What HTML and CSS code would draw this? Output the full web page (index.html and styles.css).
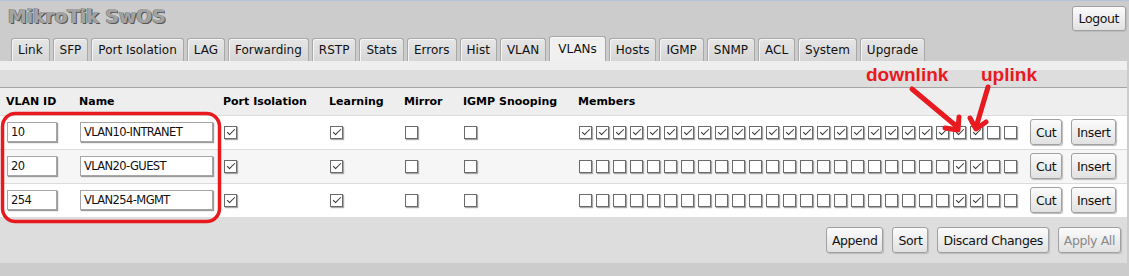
FILE: index.html
```html
<!DOCTYPE html>
<html>
<head>
<meta charset="utf-8">
<link rel="stylesheet" href="styles.css">
</head>
<body>
<div class="top">
  <div class="title">MikroTik SwOS</div>
  <button class="btn logout">Logout</button>
</div>
<div class="tabs">
  <span class="tab">Link</span><span class="tab">SFP</span><span class="tab">Port Isolation</span><span class="tab">LAG</span><span class="tab">Forwarding</span><span class="tab">RSTP</span><span class="tab">Stats</span><span class="tab">Errors</span><span class="tab">Hist</span><span class="tab">VLAN</span><span class="tab active">VLANs</span><span class="tab">Hosts</span><span class="tab">IGMP</span><span class="tab">SNMP</span><span class="tab">ACL</span><span class="tab">System</span><span class="tab">Upgrade</span>
</div>
<div class="panel">
  <div class="band"></div>
  <table class="grid">
    <colgroup>
      <col class="w1"><col class="w2"><col class="w3"><col class="w4"><col class="w5"><col class="w6"><col class="w7"><col class="w8"><col class="w9">
    </colgroup>
    <thead>
      <tr><th>VLAN ID</th><th>Name</th><th>Port Isolation</th><th>Learning</th><th>Mirror</th><th>IGMP Snooping</th><th>Members</th><th></th><th></th></tr>
    </thead>
    <tbody>
      <tr>
        <td><span class="inp id">10</span></td>
        <td><span class="inp name">VLAN10-INTRANET</span></td>
        <td><i class="cb on"></i></td>
        <td><i class="cb on"></i></td>
        <td><i class="cb"></i></td>
        <td><i class="cb"></i></td>
        <td><div class="members"><i class="cb on"></i><i class="cb on"></i><i class="cb on"></i><i class="cb on"></i><i class="cb on"></i><i class="cb on"></i><i class="cb on"></i><i class="cb on"></i><i class="cb on"></i><i class="cb on"></i><i class="cb on"></i><i class="cb on"></i><i class="cb on"></i><i class="cb on"></i><i class="cb on"></i><i class="cb on"></i><i class="cb on"></i><i class="cb on"></i><i class="cb on"></i><i class="cb on"></i><i class="cb on"></i><i class="cb on"></i><i class="cb on"></i><i class="cb on"></i><i class="cb"></i><i class="cb"></i></div></td>
        <td><button class="btn">Cut</button></td>
        <td><button class="btn">Insert</button></td>
      </tr>
      <tr class="alt">
        <td><span class="inp id">20</span></td>
        <td><span class="inp name">VLAN20-GUEST</span></td>
        <td><i class="cb on"></i></td>
        <td><i class="cb on"></i></td>
        <td><i class="cb"></i></td>
        <td><i class="cb"></i></td>
        <td><div class="members"><i class="cb"></i><i class="cb"></i><i class="cb"></i><i class="cb"></i><i class="cb"></i><i class="cb"></i><i class="cb"></i><i class="cb"></i><i class="cb"></i><i class="cb"></i><i class="cb"></i><i class="cb"></i><i class="cb"></i><i class="cb"></i><i class="cb"></i><i class="cb"></i><i class="cb"></i><i class="cb"></i><i class="cb"></i><i class="cb"></i><i class="cb"></i><i class="cb"></i><i class="cb on"></i><i class="cb on"></i><i class="cb"></i><i class="cb"></i></div></td>
        <td><button class="btn">Cut</button></td>
        <td><button class="btn">Insert</button></td>
      </tr>
      <tr>
        <td><span class="inp id">254</span></td>
        <td><span class="inp name">VLAN254-MGMT</span></td>
        <td><i class="cb on"></i></td>
        <td><i class="cb on"></i></td>
        <td><i class="cb"></i></td>
        <td><i class="cb"></i></td>
        <td><div class="members"><i class="cb"></i><i class="cb"></i><i class="cb"></i><i class="cb"></i><i class="cb"></i><i class="cb"></i><i class="cb"></i><i class="cb"></i><i class="cb"></i><i class="cb"></i><i class="cb"></i><i class="cb"></i><i class="cb"></i><i class="cb"></i><i class="cb"></i><i class="cb"></i><i class="cb"></i><i class="cb"></i><i class="cb"></i><i class="cb"></i><i class="cb"></i><i class="cb"></i><i class="cb on"></i><i class="cb on"></i><i class="cb"></i><i class="cb"></i></div></td>
        <td><button class="btn">Cut</button></td>
        <td><button class="btn">Insert</button></td>
      </tr>
    </tbody>
  </table>
  <div class="footer">
    <button class="btn">Append</button>
    <button class="btn">Sort</button>
    <button class="btn">Discard Changes</button>
    <button class="btn disabled">Apply All</button>
  </div>
</div>
<svg class="overlay" width="1129" height="276" viewBox="0 0 1129 276">
  <rect x="2.5" y="113.5" width="217" height="108" rx="13" ry="13" fill="none" stroke="#e8191f" stroke-width="3.5"/>
  <text x="866" y="81" class="anno">downlink</text>
  <text x="981" y="81" class="anno">uplink</text>
  <g stroke="#e8191f" stroke-width="5" fill="none" stroke-linecap="round" stroke-linejoin="round">
    <line x1="912" y1="89" x2="955" y2="125"/>
    <polyline points="945,128 958,130 959,117"/>
    <line x1="988" y1="87" x2="977" y2="124"/>
    <polyline points="970,118 976,129 986,122"/>
  </g>
</svg>
</body>
</html>
```
FILE: styles.css
```css
* { box-sizing: border-box; }
html, body { margin: 0; padding: 0; }
body {
  background: #cccccc;
  border-top: 1px solid #b4c4d6;
  font-family: "DejaVu Sans", Verdana, sans-serif;
  font-size: 12px;
  color: #000;
  width: 1129px;
  height: 276px;
  overflow: hidden;
  position: relative;
}
.top {
  display: flex;
  justify-content: space-between;
  align-items: flex-start;
  padding: 3px 3px 0 8px;
  height: 35px;
}
.title {
  font-family: "DejaVu Sans", Verdana, sans-serif;
  font-weight: bold;
  font-size: 19px;
  line-height: 24px;
  color: #a3a3a3;
  text-shadow: 1px 1px 0 #555, -1px 0 0 #8a8a8a;
  letter-spacing: -0.2px;
}
.btn {
  font-family: "DejaVu Sans", Verdana, sans-serif;
  font-size: 12.5px;
  letter-spacing: -0.4px;
  color: #111;
  background: linear-gradient(#fbfbfb, #e1e1e1);
  border: 1px solid #a0a0a0;
  border-radius: 3px;
  box-shadow: 1px 1px 1px #bbb;
  height: 26px;
  padding: 0 5px;
  margin: 0;
  cursor: default;
}
.logout { margin-top: 2px; height: 25px; padding: 0 6px; }
.btn.disabled { color: #888; }
.tabs {
  display: flex;
  align-items: flex-end;
  gap: 3px;
  padding-left: 11px;
  height: 25px;
}
.tab {
  display: block;
  height: 23px;
  line-height: 22px;
  padding: 0 6px;
  background: linear-gradient(#e6e6e6, #d6d6d6);
  border: 1px solid #a8a8a8;
  border-bottom: none;
  border-radius: 3px 3px 0 0;
  box-shadow: inset 1px 1px 0 #f6f6f6;
  font-size: 12px;
  color: #111;
}
.tab.active {
  height: 25px;
  line-height: 25px;
  background: #f0f0f0;
  padding: 0 8px;
}
.panel {
  background: #eeeeee;
  width: 1127px;
  padding-top: 9px;
}
.band {
  height: 18px;
  background: #dddddd;
  border-bottom: 1px solid #a5a5a5;
}
.grid {
  border-collapse: collapse;
  table-layout: fixed;
  width: 1127px;
}
.w1 { width: 73px; } .w2 { width: 144px; } .w3 { width: 106px; } .w4 { width: 75px; }
.w5 { width: 59px; } .w6 { width: 115px; } .w7 { width: 452px; } .w8 { width: 41px; } .w9 { width: 62px; }
.grid th {
  text-align: left;
  font-size: 11px;
  font-weight: bold;
  height: 27px;
  padding: 1px 0 0 6px;
  background: #eeeeee;
  border-bottom: 1px solid #dcdcdc;
  white-space: nowrap;
}
.grid td {
  height: 34px;
  padding: 0 0 0 6px;
  background: #ffffff;
  border-bottom: 1px solid #dcdcdc;
  vertical-align: middle;
  white-space: nowrap;
}
.grid tr.alt td { background: #f6f6f6; }
.grid tr:last-child td { border-bottom: none; }
.inp {
  display: block;
  height: 20px;
  line-height: 18px;
  padding-left: 3px;
  margin-left: 1px;
  background: #fff;
  border: 1px solid #a6a6a6;
  box-shadow: 1px 1px 1px #9a9a9a;
  font-size: 11.5px;
  letter-spacing: -0.6px;
  color: #111;
}
.inp.id { width: 50px; }
.inp.name { width: 133px; }
.cb {
  display: block;
  position: relative;
  width: 13px;
  height: 13px;
  margin-left: 1px;
  background: #fff;
  border: 1px solid #6a6a6a;
  box-shadow: 1px 1px 1px #a8a8a8;
}
.cb.on::after {
  content: "";
  position: absolute;
  left: 2px;
  top: 2px;
  width: 7px;
  height: 3px;
  border-left: 1.5px solid #333;
  border-bottom: 1.5px solid #333;
  transform: rotate(-45deg);
}
.members {
  display: flex;
  gap: 4px;
}
.members .cb { margin-left: 1px; margin-right: -1px; }
.footer {
  background: #dddddd;
  height: 46px;
  display: flex;
  justify-content: flex-end;
  align-items: center;
  gap: 9px;
  padding-right: 6px;
}
.overlay {
  position: absolute;
  left: 0;
  top: -1px;
  pointer-events: none;
}
.anno {
  font-family: "Liberation Sans", Arial, sans-serif;
  font-weight: bold;
  font-size: 19px;
  fill: #e8191f;
}
```
